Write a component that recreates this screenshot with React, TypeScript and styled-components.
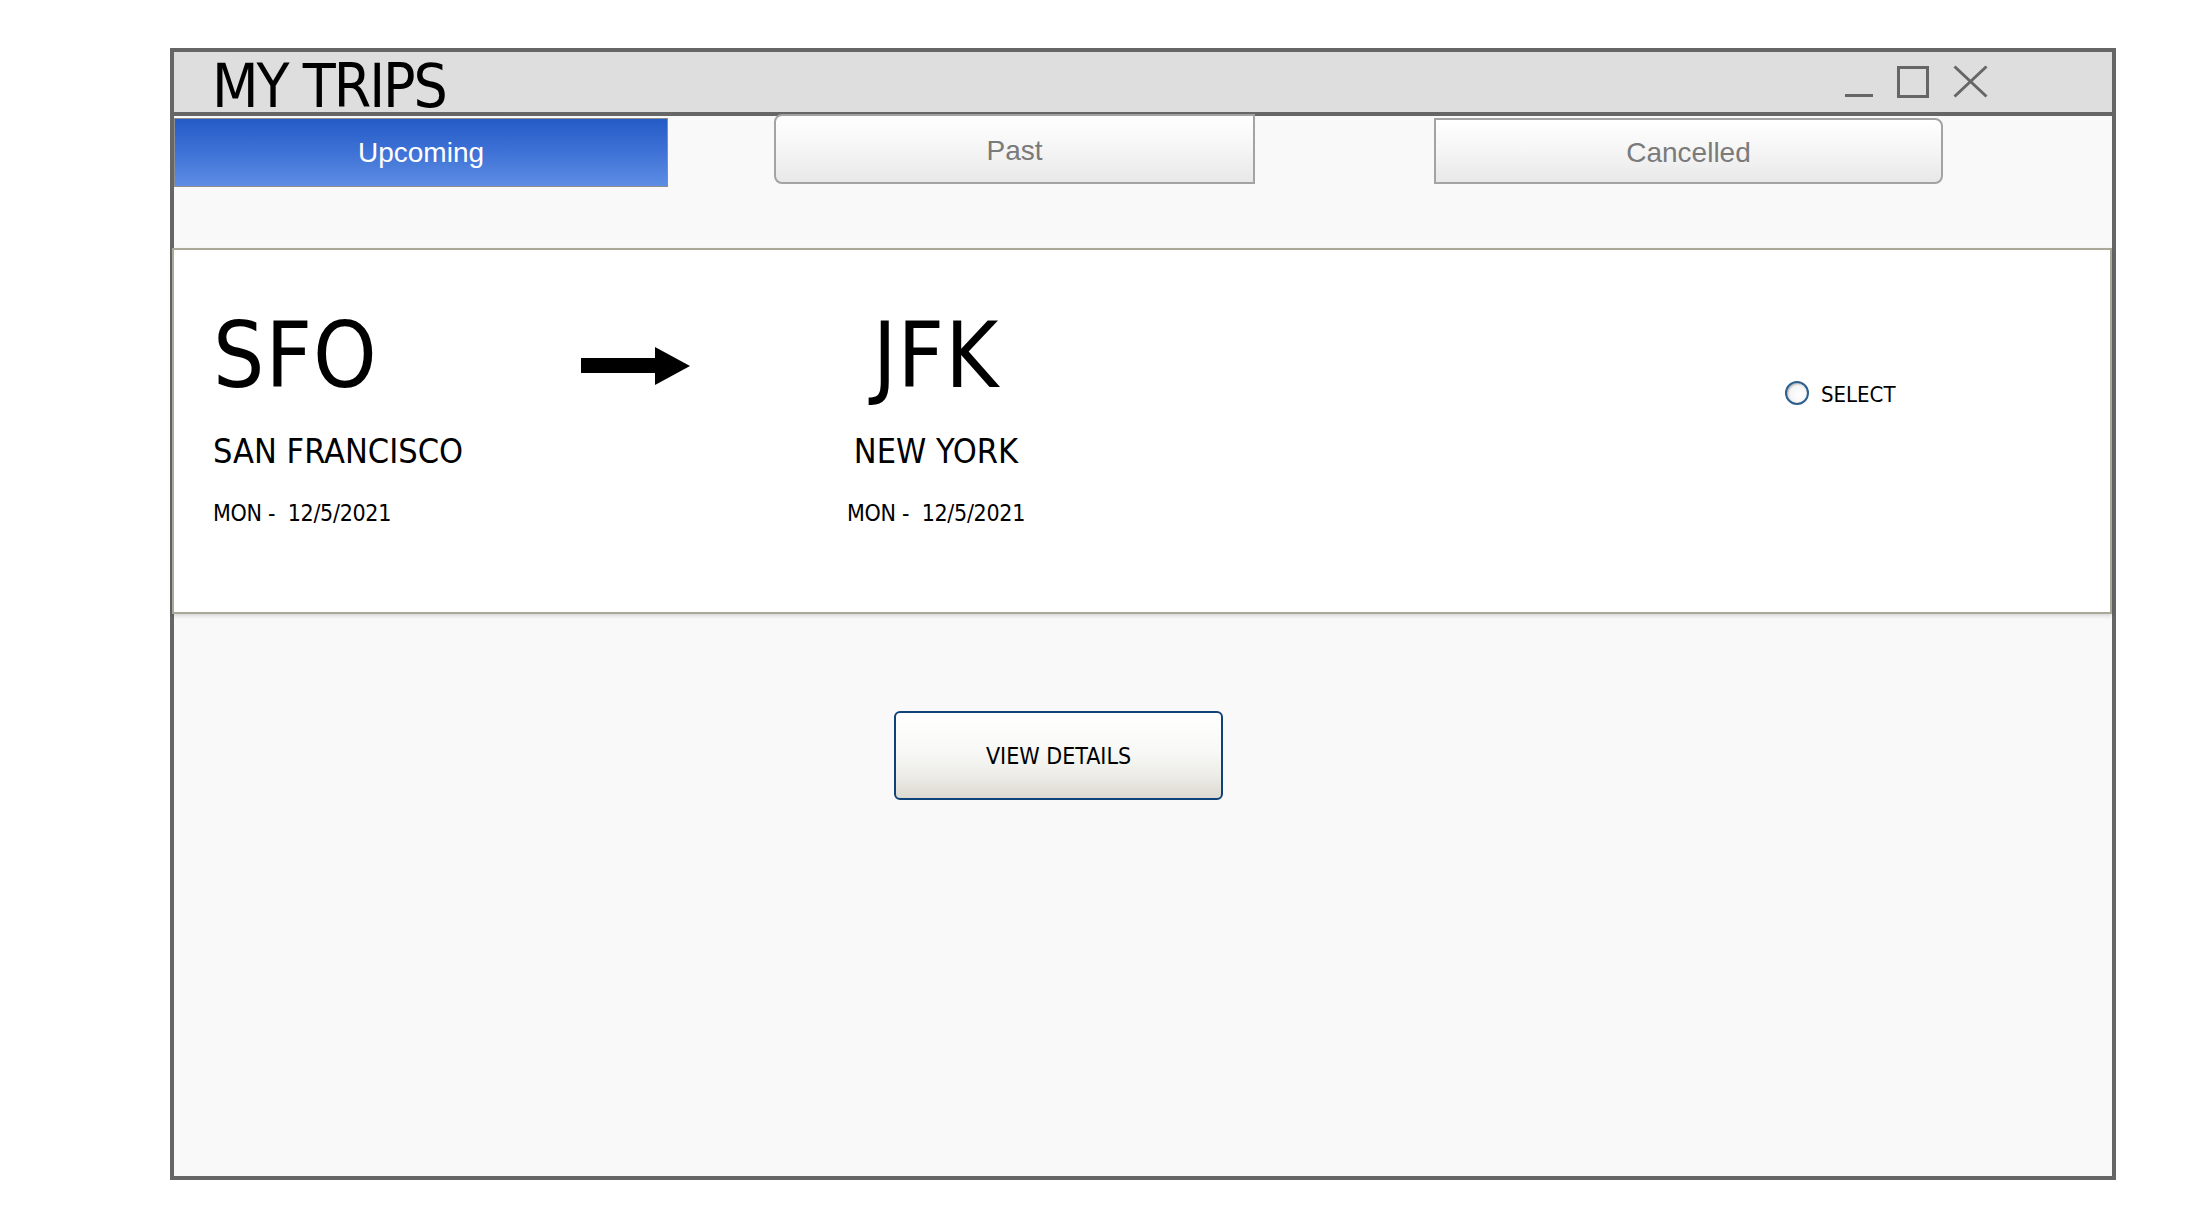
import {FC} from "react";
import styled, {createGlobalStyle} from "styled-components";

const GlobalStyle = createGlobalStyle`
  html, body {
    margin: 0;
    padding: 0;
    background: #ffffff;
  }
  * {
    box-sizing: border-box;
  }
`

const TAHOMA = `"DejaVu Sans Condensed", "DejaVu Sans", sans-serif`;
const HELVETICA = `"Liberation Sans", Arial, sans-serif`;

const Page = styled.div`
  width: 2204px;
  height: 1230px;
  padding: 48px 0 0 170px;
  background: #ffffff;
`

const Window = styled.div`
  width: 1946px;
  height: 1132px;
  border: 4px solid #666666;
  background: #f9f9f9;
  display: flex;
  flex-direction: column;
`

const TitleBar = styled.div`
  height: 64px;
  flex-shrink: 0;
  background: #dedede;
  border-bottom: 4px solid #666666;
  display: flex;
  align-items: flex-start;
  justify-content: space-between;
  padding: 0 124px 0 38px;
`

const Title = styled.h1`
  margin: 4px 0 0;
  font-family: ${TAHOMA};
  font-weight: 400;
  font-size: 60px;
  line-height: 60px;
  letter-spacing: -2px;
  color: #000000;
`

const Controls = styled.div`
  display: flex;
  align-items: flex-start;
  margin-top: 13px;
  gap: 24px;
`

const TabArea = styled.div`
  height: 132px;
  flex-shrink: 0;
  display: flex;
  align-items: flex-start;
`

const Tab = styled.button<{ $active?: boolean; $round?: "left" | "right"; $top: number; $left: number; $width: number; $height: number }>`
  margin: ${p => p.$top}px 0 0 ${p => p.$left}px;
  width: ${p => p.$width}px;
  height: ${p => p.$height}px;
  padding: ${p => (p.$active ? "0" : "3px 0 0")};
  font-family: ${HELVETICA};
  font-size: 28px;
  cursor: pointer;
  color: ${p => (p.$active ? "#ffffff" : "#7a7a7a")};
  background: ${p => (p.$active
    ? "linear-gradient(180deg, #245bc6 0%, #3f72d6 50%, #5d8de4 100%)"
    : "linear-gradient(180deg, #ffffff 0%, #f5f5f5 50%, #e8e8e8 100%)")};
  border: ${p => (p.$active ? "1px solid #8e8e8e" : "2px solid #a3a3a3")};
  border-radius: ${p => (p.$round === "left" ? "8px 0 0 8px" : p.$round === "right" ? "0 8px 8px 0" : "0")};
`

const Card = styled.div`
  height: 366px;
  flex-shrink: 0;
  margin-left: -2px;
  background: #ffffff;
  border: 2px solid #a9a899;
  box-shadow: 0 2px 4px rgba(0, 0, 0, 0.14);
  display: flex;
  align-items: flex-start;
  padding: 61px 0 0 39px;
`

const Leg = styled.div<{ $center?: boolean; $width: number }>`
  width: ${p => p.$width}px;
  display: flex;
  flex-direction: column;
  align-items: ${p => (p.$center ? "center" : "flex-start")};
  font-family: ${TAHOMA};
  color: #000000;
`

const Code = styled.div`
  font-size: 90px;
  line-height: 90px;
  letter-spacing: 1px;
`

const City = styled.div`
  margin-top: 33px;
  font-size: 34px;
  line-height: 34px;
  letter-spacing: 0;
`

const DateLine = styled.div`
  margin-top: 34px;
  font-size: 23px;
  line-height: 23px;
  letter-spacing: -0.3px;
  white-space: pre;
`

const ArrowWrap = styled.div`
  margin-top: 36px;
  width: 110px;
  flex-shrink: 0;
`

const Radio = styled.label`
  margin: 67px 0 0 604px;
  display: flex;
  align-items: center;
  gap: 12px;
  font-family: ${TAHOMA};
  font-size: 22px;
  line-height: 24px;
  color: #000000;
  cursor: pointer;
`

const RadioCircle = styled.span`
  width: 24px;
  height: 24px;
  border-radius: 50%;
  border: 2px solid #2d5f8f;
  background: radial-gradient(circle at 60% 60%, #ffffff 0%, #f4f4f4 60%, #d6d6d6 100%);
  box-shadow: inset 1px 1px 2px rgba(0, 0, 0, 0.25);
`

const RadioText = styled.span`
  padding-top: 5px;
`

const Footer = styled.div`
  flex: 1;
  padding: 97px 0 0 720px;
`

const DetailsButton = styled.button`
  width: 329px;
  height: 89px;
  border: 2px solid #0f4279;
  border-radius: 6px;
  background: linear-gradient(180deg, #ffffff 0%, #f8f8f6 45%, #ecebe7 75%, #dcd9d1 100%);
  font-family: ${TAHOMA};
  font-size: 23px;
  letter-spacing: 0;
  color: #000000;
  cursor: pointer;
`

const MinimizeIcon: FC = () => (
    <svg width="28" height="33" viewBox="0 0 28 33">
        <rect x="0" y="29" width="28" height="3" fill="#666666"/>
    </svg>
);

const MaximizeIcon: FC = () => (
    <svg width="32" height="33" viewBox="0 0 32 33">
        <rect x="1.5" y="2.5" width="29" height="29" fill="none" stroke="#666666" strokeWidth="3"/>
    </svg>
);

const CloseIcon: FC = () => (
    <svg width="35" height="33" viewBox="0 0 35 33">
        <path d="M1.5 1.5 L33.5 31.5 M33.5 1.5 L1.5 31.5" stroke="#666666" strokeWidth="3" fill="none"/>
    </svg>
);

const FlightArrow: FC = () => (
    <svg width="110" height="40" viewBox="0 0 110 40">
        <rect x="0" y="11" width="76" height="15" fill="#000000"/>
        <polygon points="74,0 109,19 74,38" fill="#000000"/>
    </svg>
);

export default function App() {
    return (
        <Page>
            <GlobalStyle/>
            <Window>
                <TitleBar>
                    <Title>MY TRIPS</Title>
                    <Controls>
                        <MinimizeIcon/>
                        <MaximizeIcon/>
                        <CloseIcon/>
                    </Controls>
                </TitleBar>

                <TabArea>
                    <Tab $active $top={2} $left={0} $width={494} $height={69}>Upcoming</Tab>
                    <Tab $round="left" $top={-2} $left={106} $width={481} $height={70}>Past</Tab>
                    <Tab $round="right" $top={2} $left={179} $width={509} $height={66}>Cancelled</Tab>
                </TabArea>

                <Card>
                    <Leg $width={368}>
                        <Code>SFO</Code>
                        <City>SAN FRANCISCO</City>
                        <DateLine>{"MON -  12/5/2021"}</DateLine>
                    </Leg>
                    <ArrowWrap>
                        <FlightArrow/>
                    </ArrowWrap>
                    <Leg $center $width={490}>
                        <Code>JFK</Code>
                        <City>NEW YORK</City>
                        <DateLine>{"MON -  12/5/2021"}</DateLine>
                    </Leg>
                    <Radio>
                        <RadioCircle/>
                        <RadioText>SELECT</RadioText>
                    </Radio>
                </Card>

                <Footer>
                    <DetailsButton>VIEW DETAILS</DetailsButton>
                </Footer>
            </Window>
        </Page>
    );
}
